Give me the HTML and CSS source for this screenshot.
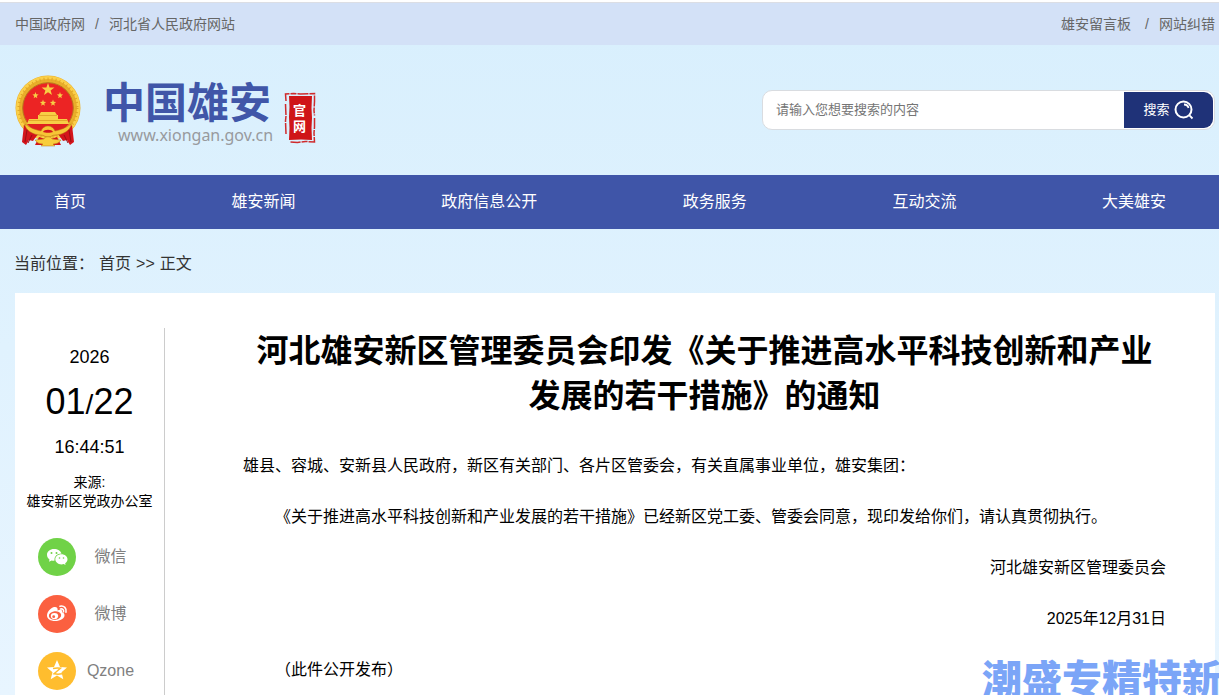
FILE: index.html
```html
<!DOCTYPE html>
<html lang="zh-CN">
<head>
<meta charset="utf-8">
<title>中国雄安官网</title>
<link rel="stylesheet" href="styles.css">
</head>
<body>
<div class="topbar">
  <div class="links"><a href="#">中国政府网</a><span>/</span><a href="#">河北省人民政府网站</a></div>
  <div class="links links-right"><a href="#">雄安留言板</a><span>/</span><a href="#">网站纠错</a></div>
</div>
<header class="header">
  <a class="brand" href="#">
    <svg class="emblem" viewBox="0 0 66 72" aria-hidden="true">
      <circle cx="33" cy="33" r="32.500" fill="#e9ae2a"/>
      <circle cx="33" cy="33" r="30.500" fill="none" stroke="#fbd04a" stroke-width="3"/>
      <circle cx="33" cy="33" r="29" fill="none" stroke="#e0a526" stroke-width="3" stroke-dasharray="1 3"/>
      <circle cx="33" cy="33" r="25.300" fill="#ec2424" stroke="#b9781c" stroke-width="1"/>
      <g fill="#f7ce45">
        <path d="M33 8l1.600 4.400 4.800.1-3.800 2.900 1.400 4.600-4-2.700-4 2.700 1.400-4.600-3.800-2.900 4.800-.1z"/>
        <path d="M20.500 17l.8 2.200 2.300.2-1.800 1.500.5 2.300-1.800-1.300-1.800 1.300.5-2.300-1.800-1.500 2.300-.2zM45 17l.8 2.200 2.300.2-1.800 1.500.5 2.300-1.800-1.300-1.800 1.300.5-2.300-1.800-1.500 2.300-.2zM28 24.500l.8 2.200 2.300.2-1.800 1.500.5 2.300-1.800-1.300-1.800 1.300.5-2.300-1.800-1.500 2.300-.2zM38 24.500l.8 2.200 2.300.2-1.800 1.500.5 2.300-1.800-1.300-1.800 1.300.5-2.300-1.800-1.500 2.300-.2z"/>
        <path d="M26 37h14l2 3H24zM23 40h20v4h9l2 5H12l2-5h9z"/>
      </g>
      <path d="M24 40.500h18M14 45.500h38" stroke="#d99a20" stroke-width=".7"/>
      <path d="M12 49h42l-6 6-15 3-15-3z" fill="#e0201f"/>
      <path d="M9 50c4 4 8 6 14 9l-5 7-4-1-3 5-4-3zM57 50c-4 4-8 6-14 9l5 7 4-1 3 5 4-3z" fill="#d4141b"/>
      <path d="M17 60l-4 8M12 55l-2 12M49 60l4 8M54 55l2 12" stroke="#970f14" stroke-width="1"/>
      <path d="M10 49c5 4 11 6 16 7 1-3 4-5 7-5s6 2 7 5c5-1 11-3 16-7 0 6-8 11-16 11-3 0-4 2-7 2s-4-2-7-2c-8 0-16-5-16-11z" fill="#f6c536" stroke="#b97516" stroke-width=".5"/>
      <path d="M28 57c1-3 9-3 10 0-2 1-8 1-10 0z" fill="#d4141b"/>
      <path d="M20 70l4-8 9 3 9-3 4 8z" fill="#d4141b"/>
      <path d="M20 65l9-1c1-3 7-3 8 0l9 1c-2 3-5 4-8 4l2 2H26l2-2c-3 0-6-1-8-4z" fill="#f8cd3b" stroke="#b97516" stroke-width=".5"/>
    </svg>
    <span class="wordmark">
      <span class="name">中国雄安</span>
      <span class="domain">www.xiongan.gov.cn</span>
    </span>
    <span class="seal">
      <svg viewBox="0 0 32 52" aria-hidden="true"><path d="M5 4h23l-.5 12 .5 10-.5 10 .5 12-11-.5-12 .5.500-12-.5-11 .5-10z" fill="#cf1517"/><path d="M2 9L1.500 2l8-.5 7 .5 14-.5v8l-.5 9 .5 5M30.500 26v9l-.5 6 .5 9-9-.5-8 1-7-.5M2 42l-.5-13 .5-5-.5-12" fill="none" stroke="#cf2a2c" stroke-width="1.500" stroke-dasharray="11 1 6 1"/></svg>
      <span class="seal-text">官网</span>
    </span>
  </a>
  <form class="search">
    <input type="text" aria-label="搜索内容" placeholder="请输入您想要搜索的内容">
    <button type="button">搜索
      <svg viewBox="0 0 20 20" width="20" height="20" aria-hidden="true"><circle cx="9.500" cy="9.500" r="8" fill="none" stroke="#fff" stroke-width="2"/><path d="M10 4.500c2.500 0 4 1.500 4.500 3.500M15.200 15.200l3.300 3.300" fill="none" stroke="#fff" stroke-width="1.800"/></svg>
    </button>
  </form>
</header>
<nav class="nav">
  <a href="#">首页</a><a href="#">雄安新闻</a><a href="#">政府信息公开</a><a href="#">政务服务</a><a href="#">互动交流</a><a href="#">大美雄安</a>
</nav>
<div class="crumbs">当前位置：<a href="#">首页</a><span>&gt;&gt;</span><span>正文</span></div>
<main class="panel">
  <aside class="side">
    <div class="year">2026</div>
    <div class="day">01<span>/</span>22</div>
    <div class="year">16:44:51</div>
    <div class="source">来源:<br>雄安新区党政办公室</div>
    <div class="share">
      <a href="#">
        <svg viewBox="0 0 38 38" aria-hidden="true"><circle cx="19" cy="19" r="19" fill="#70d247"/><path d="M16 11c-4 0-7 2.500-7 5.800 0 2 1 3.500 2.500 4.600l-.4 2.300 2.500-1.300c1 .2 2 .3 3 .2-.7-3.700 2.300-7 7-7-.8-2.700-3.800-4.600-7.600-4.600z" fill="#fff"/><path d="M23.500 16.300c-3.500 0-6.200 2.200-6.200 5s2.700 5.100 6.200 5.100c.8 0 1.500-.1 2.200-.3l1.800 1-.3-1.800c1.400-.9 2.300-2.300 2.300-4 0-2.800-2.700-5-6-5z" fill="#fff"/><g fill="#70d247"><circle cx="13.500" cy="15" r="1"/><circle cx="18.500" cy="15" r="1"/><circle cx="21.500" cy="20" r=".8"/><circle cx="25.500" cy="20" r=".8"/></g></svg>
        <span>微信</span>
      </a>
      <a href="#">
        <svg viewBox="0 0 38 38" aria-hidden="true"><circle cx="19" cy="19" r="19" fill="#fb6040"/><path d="M16 12c-3.500 1-7 5-7 8.500 0 3.300 3.500 5.500 8 5.500 5.500 0 9.500-2.700 9.500-5.800 0-1.800-1.200-2.700-2.500-3 .6-2-.8-3.300-4.500-1.700.7-2.400-.8-4.100-3.500-3.500z" fill="#fff"/><ellipse cx="17" cy="20.500" rx="6.200" ry="4.300" fill="#fb6040" transform="rotate(-8 17 20.500)"/><ellipse cx="16.500" cy="21" rx="3.700" ry="3.100" fill="#fff"/><circle cx="15.700" cy="21.700" r="1.400" fill="#fb6040"/><path d="M22 11.200c4-1 6.800 2 6 6M22.500 14c2.200-.5 3.500.8 3 2.800" fill="none" stroke="#fff" stroke-width="1.600" stroke-linecap="round"/></svg>
        <span>微博</span>
      </a>
      <a href="#">
        <svg viewBox="0 0 38 38" aria-hidden="true"><circle cx="19" cy="19" r="19" fill="#ffbd2e"/><path d="M19 8l3 7 7 .5-5.500 4.800 1.800 7-6.300-3.900-6.300 3.900 1.800-7L9 15.500l7-.5z" fill="#fff"/><path d="M15 16.500c3-.8 5-.8 7.500-.3l-6.500 5.600c3 .6 5 .6 8 0" fill="none" stroke="#ffbd2e" stroke-width="1.500"/></svg>
        <span>Qzone</span>
      </a>
    </div>
  </aside>
  <article class="article">
    <h1>河北雄安新区管理委员会印发《关于推进高水平科技创新和产业发展的若干措施》的通知</h1>
    <p>雄县、容城、安新县人民政府，新区有关部门、各片区管委会，有关直属事业单位，雄安集团：</p>
    <p class="indent">《关于推进高水平科技创新和产业发展的若干措施》已经新区党工委、管委会同意，现印发给你们，请认真贯彻执行。</p>
    <p class="sign">河北雄安新区管理委员会</p>
    <p class="sign">2025年12月31日</p>
    <p class="indent">（此件公开发布）</p>
  </article>
</main>
<div class="watermark">潮盛专精特新</div>
</body>
</html>
```
FILE: styles.css
```css
* { box-sizing: border-box; }
body {
  margin: 0;
  min-height: 100vh;
  display: flex;
  flex-direction: column;
  position: relative;
  overflow: hidden;
  font: 16px/24px "Liberation Sans", "Noto Sans CJK SC", sans-serif;
  color: #000;
  background: linear-gradient(#d8effd, #e8f5ff);
}
a { color: inherit; text-decoration: none; }
.topbar {
  display: flex;
  justify-content: space-between;
  align-items: center;
  height: 45px;
  padding: 0 4px 0 15px;
  border-top: 2px solid #fff;
  box-shadow: inset 0 1px #dcdee4;
  background: #d3e1f7;
  color: #666;
  font-size: 14px;
}
.links { display: flex; gap: 10px; }
.links-right a:first-child { margin-right: 4px; }
.header {
  display: flex;
  justify-content: space-between;
  align-items: center;
  height: 130px;
  padding: 0 4px 0 15px;
}
.brand { display: flex; align-items: center; }
.emblem { width: 66px; height: 72px; margin-top: 2px; }
.wordmark { display: flex; flex-direction: column; margin-left: 22px; }
.name {
  font: 700 42px/50px "Noto Sans CJK SC", sans-serif;
  color: #4056a8;
}
.domain {
  padding-left: 15px;
  font: 16px/20px "Noto Sans", sans-serif;
  color: #989a9d;
}
.seal {
  display: grid;
  place-items: center;
  margin: 16px 0 0 11px;
}
.seal > * { grid-area: 1 / 1; }
.seal svg { width: 32px; height: 52px; }
.seal-text {
  width: 14px;
  color: #fff;
  font: 700 13px/16px "Noto Sans CJK SC", sans-serif;
}
.search {
  display: flex;
  width: 453px;
  height: 40px;
  margin-bottom: 1px;
  padding: 1px;
  border: 1px solid #d9dce0;
  border-radius: 10px;
  background: #fff;
}
.search input {
  flex: 1;
  min-width: 0;
  padding: 0 12px;
  border: 0;
  outline: 0;
  background: none;
  font: inherit;
  font-size: 13px;
}
.search input::placeholder { color: #757575; }
.search button {
  display: flex;
  align-items: center;
  justify-content: center;
  gap: 4px;
  width: 89px;
  padding: 0;
  border: 0;
  border-radius: 0 9px 9px 0;
  background: #1f3278;
  color: #fff;
  font: inherit;
  font-size: 13px;
}
.nav {
  display: flex;
  justify-content: space-between;
  align-items: center;
  height: 54px;
  padding: 0 53px 0 54px;
  background: #3f55a8;
  color: #fff;
}
.crumbs {
  display: flex;
  gap: 5px;
  padding: 23px 15px 17px 14px;
  color: #333;
}
.panel {
  flex: 1;
  display: flex;
  margin: 0 4px 0 15px;
  padding-top: 35px;
  background: #fff;
}
.side {
  width: 150px;
  padding-top: 17px;
  border-right: 1px solid #ccc;
  text-align: center;
}
.year { font-size: 18px; line-height: 24px; }
.day { margin: 12px 0 9px; font-size: 36px; line-height: 42px; }
.day span { font-size: 28px; }
.source { margin-top: 14px; font-size: 14px; line-height: 19px; }
.share {
  display: flex;
  flex-direction: column;
  gap: 19px;
  margin-top: 27px;
  padding-left: 23px;
  color: #808080;
}
.share a { display: flex; align-items: center; }
.share svg { width: 38px; height: 38px; }
.share span { width: 69px; }
.article { flex: 1; padding: 1px 49px 0 78px; }
h1 {
  margin: 0 0 35px;
  font-size: 32px;
  line-height: 45px;
  text-align: center;
}
p { margin: 0 0 27px; }
p:last-child { margin-bottom: 0; }
.indent { text-indent: 32px; }
.sign { text-align: right; }
.watermark {
  position: absolute;
  right: -3px;
  bottom: -4px;
  font: 900 40px/44px "Noto Sans CJK SC", sans-serif;
  color: #7ba5f7;
  white-space: nowrap;
}
```
